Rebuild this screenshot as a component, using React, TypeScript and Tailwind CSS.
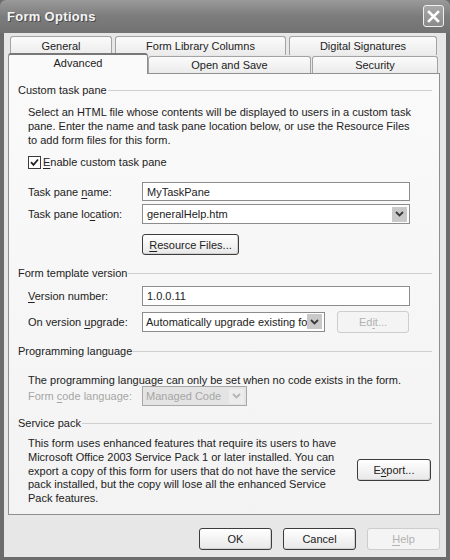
import { ReactNode } from 'react'

const U = ({ children }: { children: ReactNode }) => (
  <span className="underline underline-offset-[2px] decoration-1">{children}</span>
)

const Chevron = ({ light }: { light?: boolean }) => (
  <svg width="9" height="6" viewBox="0 0 9 6">
    <path d="M1 1 L4.5 4.5 L8 1" fill="none" stroke={light ? '#b4b4b4' : '#3a3a3a'} strokeWidth="1.8" />
  </svg>
)

const GroupHeader = ({ title, className = '' }: { title: string, className?: string }) => (
  <div className={`flex items-center h-[14px] ${className}`}>
    <span>{title}</span>
    <div className="flex-1 h-px bg-[#cfcfcf] ml-[1px] mr-[7px]" />
  </div>
)

const Button = ({ children, disabled, className = '' }: { children: ReactNode, disabled?: boolean, className?: string }) => (
  <div
    className={`flex items-center justify-center rounded-[3px] border ${disabled
      ? 'border-[#cdcdcd] text-[#b2b2b2] bg-[#f4f4f4]'
      : 'border-[#3c3c3c] bg-gradient-to-b from-[#ffffff] to-[#e8e8e8] shadow-[inset_-1px_-1px_0_#d2d2d2]'} ${className}`}
  >
    {children}
  </div>
)

const Tab = ({ label, className = '' }: { label: string, className?: string }) => (
  <div className={`flex items-center justify-center border border-b-0 border-[#a3a3a3] rounded-t-[3px] bg-gradient-to-b from-[#fbfbfb] to-[#ebebeb] ${className}`}>
    {label}
  </div>
)

const App = () => {
  return (
    <div className="w-[450px] h-[560px] flex flex-col bg-[#6c6c6c] font-['Liberation_Sans',Arial,sans-serif] text-[11px] text-[#222] leading-[14px] whitespace-nowrap">
      {/* title bar */}
      <div className="h-[33px] flex items-center justify-between pl-[7px] pr-[6px] bg-gradient-to-b from-[#9a9a9a] via-[#7c7c7c] to-[#727272] rounded-t-[6px]">
        <span className="text-[13px] font-bold text-[#f4f4f4] tracking-[0.3px] [text-shadow:1px_1px_0_#4a4a4a]">Form Options</span>
        <div className="w-[21px] h-[22px] mt-[-1px] rounded-[3px] border border-[#f0f0f0] bg-gradient-to-b from-[#a8a8a8] to-[#8a8a8a] flex items-center justify-center">
          <svg width="13" height="13" viewBox="0 0 13 13">
            <path d="M2 2 L11 11 M11 2 L2 11" stroke="#ffffff" strokeWidth="2.6" strokeLinecap="square" />
          </svg>
        </div>
      </div>

      <div className="flex-1 flex flex-col bg-[#e7e7e7] mx-[4px] mb-[3px] pt-[3px] pl-[4px] pr-[6px]">
        {/* tabs */}
        <div className="flex h-[19px] pl-[2px] gap-[3px]">
          <Tab label="General" className="w-[102px]" />
          <Tab label="Form Library Columns" className="w-[171px]" />
          <Tab label="Digital Signatures" className="w-[148px]" />
        </div>
        <div className="flex h-[18px] items-end">
          <div className="relative z-10 w-[140px] h-[21px] mb-[-1px] flex items-start justify-center pt-[1px] border border-b-0 border-[#8f8f8f] border-t-[2px] border-t-[#777] rounded-t-[3px] bg-[#fafafa]">
            Advanced
          </div>
          <Tab label="Open and Save" className="w-[163px] h-[17px]" />
          <Tab label="Security" className="w-[126px] h-[17px] ml-[1px]" />
        </div>

        {/* panel */}
        <div className="w-[432px] h-[442px] border border-[#8f8f8f] bg-gradient-to-b from-[#fafafa] to-[#f3f3f3] pl-[9px] pt-[9px]">
          <GroupHeader title="Custom task pane" />
          <p className="ml-[10px] mt-[8px]">
            Select an HTML file whose contents will be displayed to users in a custom task<br />
            pane. Enter the name and task pane location below, or use the Resource Files<br />
            to add form files for this form.
          </p>
          <div className="ml-[10px] mt-[8px] flex items-center h-[14px]">
            <div className="w-[13px] h-[13px] border border-[#3b3b3b] bg-white flex items-center justify-center">
              <svg width="9" height="9" viewBox="0 0 9 9">
                <path d="M1 4.2 L3.5 6.8 L8 1.5" fill="none" stroke="#222" strokeWidth="1.8" />
              </svg>
            </div>
            <span className="ml-[2px]"><U>E</U>nable custom task pane</span>
          </div>

          <div className="ml-[10px] mt-[13px] flex items-center">
            <span className="w-[114px]">Task pane <U>n</U>ame:</span>
            <div className="w-[268px] h-[19px] border border-[#8c8c8c] bg-white pl-[4px] flex items-center">MyTaskPane</div>
          </div>
          <div className="ml-[10px] mt-[3px] flex items-center">
            <span className="w-[114px]">Task pane lo<U>c</U>ation:</span>
            <div className="w-[268px] h-[20px] border border-[#8c8c8c] bg-white pl-[4px] pr-[2px] flex items-center justify-between">
              <span>generalHelp.htm</span>
              <div className="w-[15px] h-[15px] bg-[#c9c9c9] flex items-center justify-center"><Chevron /></div>
            </div>
          </div>
          <div className="ml-[124px] mt-[10px]">
            <Button className="w-[97px] h-[21px]"><span><U>R</U>esource Files...</span></Button>
          </div>

          <GroupHeader title="Form template version" className="mt-[11px]" />
          <div className="ml-[10px] mt-[6px] flex items-center">
            <span className="w-[114px]"><U>V</U>ersion number:</span>
            <div className="w-[268px] h-[20px] border border-[#8c8c8c] bg-white pl-[4px] flex items-center">1.0.0.11</div>
          </div>
          <div className="ml-[10px] mt-[4px] flex items-center h-[23px]">
            <span className="w-[114px]">On version <U>u</U>pgrade:</span>
            <div className="w-[183px] h-[20px] border border-[#8c8c8c] bg-white pl-[3px] pr-[2px] flex items-center justify-between overflow-hidden">
              <span className="overflow-hidden">Automatically upgrade existing fo</span>
              <div className="w-[15px] h-[15px] shrink-0 bg-[#c9c9c9] flex items-center justify-center"><Chevron /></div>
            </div>
            <Button disabled className="w-[72px] h-[22px] ml-[12px]"><span>Ed<U>i</U>t...</span></Button>
          </div>

          <GroupHeader title="Programming language" className="mt-[11px]" />
          <p className="ml-[10px] mt-[15px] h-[13px]">The programming language can only be set when no code exists in the form.</p>
          <div className="ml-[10px] flex items-center">
            <span className="w-[114px] text-[#a6a6a6]">Form <U>c</U>ode language:</span>
            <div className="w-[105px] h-[20px] border border-[#a8a8a8] bg-[#e4e4e4] text-[#a6a6a6] pl-[3px] pr-[2px] flex items-center justify-between">
              <span>Managed Code</span>
              <div className="w-[15px] h-[15px] bg-[#ececec] flex items-center justify-center"><Chevron light /></div>
            </div>
          </div>

          <GroupHeader title="Service pack" className="mt-[10px]" />
          <div className="ml-[10px] mt-[7px] flex items-start">
            <p className="w-[329px] leading-[13.75px]">
              This form uses enhanced features that require its users to have<br />
              Microsoft Office 2003 Service Pack 1 or later installed. You can<br />
              export a copy of this form for users that do not have the service<br />
              pack installed, but the copy will lose all the enhanced Service<br />
              Pack features.
            </p>
            <Button className="w-[74px] h-[22px] mt-[22px]"><span>E<U>x</U>port...</span></Button>
          </div>
        </div>

        {/* bottom buttons */}
        <div className="flex justify-end gap-[11px] mt-[13px]">
          <Button className="w-[73px] h-[22px]">OK</Button>
          <Button className="w-[73px] h-[22px]">Cancel</Button>
          <Button disabled className="w-[73px] h-[22px]"><span><U>H</U>elp</span></Button>
        </div>
      </div>
    </div>
  )
}

export default App
